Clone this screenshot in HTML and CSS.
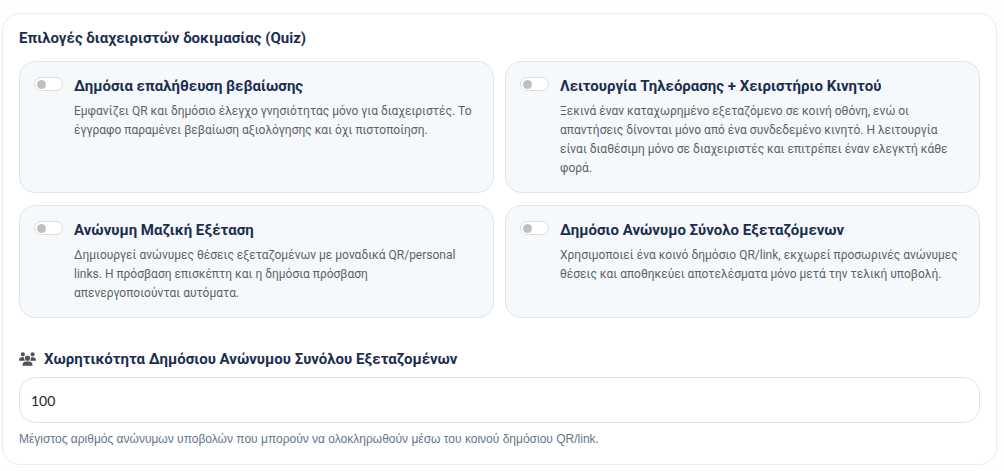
FILE: index.html
```html
<!DOCTYPE html>
<html lang="el">
<head>
<meta charset="utf-8">
<meta name="viewport" content="width=device-width, initial-scale=1">
<title>Επιλογές διαχειριστών δοκιμασίας</title>
<link rel="stylesheet" href="styles.css">
</head>
<body>
<form class="panel">
  <h2 class="panel-title">Επιλογές διαχειριστών δοκιμασίας (Quiz)</h2>
  <div class="options">
    <div class="option">
      <input class="switch" type="checkbox" role="switch" id="verify" aria-describedby="verify-text">
      <div class="option-body">
        <label class="option-title" for="verify">Δημόσια επαλήθευση βεβαίωσης</label>
        <p class="option-text" id="verify-text">Εμφανίζει QR και δημόσιο έλεγχο γνησιότητας μόνο για διαχειριστές. Το έγγραφο παραμένει βεβαίωση αξιολόγησης και όχι πιστοποίηση.</p>
      </div>
    </div>
    <div class="option">
      <input class="switch" type="checkbox" role="switch" id="tv" aria-describedby="tv-text">
      <div class="option-body">
        <label class="option-title" for="tv">Λειτουργία Τηλεόρασης + Χειριστήριο Κινητού</label>
        <p class="option-text" id="tv-text">Ξεκινά έναν καταχωρημένο εξεταζόμενο σε κοινή οθόνη, ενώ οι απαντήσεις δίνονται μόνο από ένα συνδεδεμένο κινητό. Η λειτουργία είναι διαθέσιμη μόνο σε διαχειριστές και επιτρέπει έναν ελεγκτή κάθε φορά.</p>
      </div>
    </div>
    <div class="option">
      <input class="switch" type="checkbox" role="switch" id="mass" aria-describedby="mass-text">
      <div class="option-body">
        <label class="option-title" for="mass">Ανώνυμη Μαζική Εξέταση</label>
        <p class="option-text" id="mass-text">Δημιουργεί ανώνυμες θέσεις εξεταζομένων με μοναδικά QR/personal links. Η πρόσβαση επισκέπτη και η δημόσια πρόσβαση απενεργοποιούνται αυτόματα.</p>
      </div>
    </div>
    <div class="option">
      <input class="switch" type="checkbox" role="switch" id="pool" aria-describedby="pool-text">
      <div class="option-body">
        <label class="option-title" for="pool">Δημόσιο Ανώνυμο Σύνολο Εξεταζόμενων</label>
        <p class="option-text" id="pool-text">Χρησιμοποιεί ένα κοινό δημόσιο QR/link, εκχωρεί προσωρινές ανώνυμες θέσεις και αποθηκεύει αποτελέσματα μόνο μετά την τελική υποβολή.</p>
      </div>
    </div>
  </div>
  <div class="field">
    <label class="field-label" for="capacity">
      <svg class="field-icon" viewBox="0 0 640 512" aria-hidden="true"><path d="M144 0a80 80 0 1 1 0 160A80 80 0 1 1 144 0zM512 0a80 80 0 1 1 0 160A80 80 0 1 1 512 0zM0 298.700C0 239.800 47.800 192 106.700 192h42.700c15.900 0 31 3.500 44.600 9.700c-1.300 7.200-1.900 14.700-1.900 22.300c0 38.200 16.800 72.500 43.300 96H21.300C9.600 320 0 310.400 0 298.700zM405.300 320h-.7c26.600-23.500 43.300-57.800 43.300-96c0-7.600-.7-15-1.900-22.300c13.600-6.300 28.700-9.700 44.600-9.700h42.700C592.200 192 640 239.800 640 298.700c0 11.800-9.600 21.300-21.300 21.300H405.300zM224 224a96 96 0 1 1 192 0a96 96 0 1 1-192 0zM128 485.300C128 411.700 187.700 352 261.300 352h117.400C452.300 352 512 411.700 512 485.300c0 14.700-11.900 26.700-26.700 26.700H154.700c-14.700 0-26.700-11.900-26.700-26.700z"/></svg>
      <span>Χωρητικότητα Δημόσιου Ανώνυμου Συνόλου Εξεταζομένων</span>
    </label>
    <input class="field-input" type="text" inputmode="numeric" id="capacity" value="100" aria-describedby="capacity-help">
    <p class="field-help" id="capacity-help">Μέγιστος αριθμός ανώνυμων υποβολών που μπορούν να ολοκληρωθούν μέσω του κοινού δημόσιου QR/link.</p>
  </div>
</form>
</body>
</html>
```

FILE: styles.css
```css
* {
  box-sizing: border-box;
}

body {
  margin: 0;
  padding: 13px 7px 6px 2px;
  background: #fefefe;
  font-family: Roboto, "Liberation Sans", Arial, sans-serif;
  font-size: 14px;
  color: #212529;
}

.panel {
  padding: 14px 16px 16px;
  border: 1px solid #e9eef1;
  border-radius: 18px;
  background: #fff;
}

.panel-title {
  margin: 0 0 13px;
  font-size: 15px;
  line-height: 20px;
  font-weight: 700;
  color: #1b2e50;
}

.options {
  display: grid;
  grid-template-columns: repeat(2, minmax(0, 1fr));
  gap: 12px 11px;
}

.option {
  display: flex;
  align-items: flex-start;
  gap: 11px;
  padding: 14px 18px 14px 14px;
  border: 1px solid #e0e5eb;
  border-radius: 16px;
  background: #f5f9fc;
}

.switch {
  appearance: none;
  flex: none;
  display: flex;
  align-items: center;
  width: 29px;
  height: 14px;
  margin: 1px 0 0;
  padding: 0 2px;
  border: 1px solid #dedede;
  border-radius: 7px;
  background: #fff;
}

.switch::before {
  content: "";
  width: 9px;
  height: 9px;
  border-radius: 50%;
  background: #bfbfbf;
}

.switch:checked {
  justify-content: flex-end;
  background: #1b2e50;
}

.option-title {
  display: block;
  margin-bottom: 6px;
  font-size: 15px;
  line-height: 20px;
  font-weight: 700;
  color: #1b2e50;
}

.option-text {
  margin: 0;
  font-size: 12px;
  line-height: 19px;
  color: #5e6266;
}

.field {
  margin-top: 31px;
}

.field-label {
  display: flex;
  align-items: center;
  gap: 8px;
  margin-bottom: 8px;
  font-size: 15px;
  line-height: 20px;
  font-weight: 700;
  color: #1b2e50;
}

.field-icon {
  width: 17px;
  height: 14px;
  fill: #4f5357;
}

.field-input {
  display: block;
  width: 100%;
  height: 46px;
  padding: 0 11px;
  border: 1px solid #e2e2e4;
  border-radius: 16px;
  background: #fff;
  font-family: Lato, "Liberation Sans", sans-serif;
  font-size: 14px;
  color: #212529;
}

.field-help {
  margin: 7px 0 0;
  font-family: "Liberation Sans", Arial, sans-serif;
  font-size: 12px;
  line-height: 18px;
  color: #66758a;
}
```
